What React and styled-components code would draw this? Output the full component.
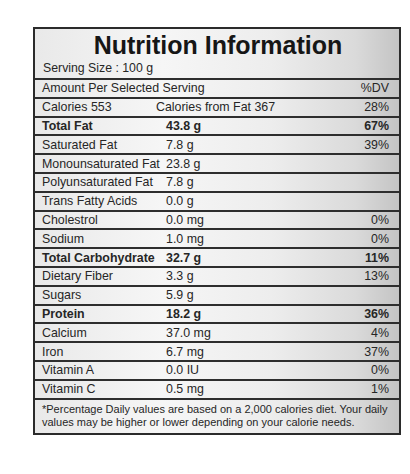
import React from 'react';
import styled, { createGlobalStyle } from 'styled-components';

const ROWS = [
	{ label: 'Total Fat', value: '43.8 g', dv: '67%', bold: true },
	{ label: 'Saturated Fat', value: '7.8 g', dv: '39%' },
	{ label: 'Monounsaturated Fat', value: '23.8 g' },
	{ label: 'Polyunsaturated Fat', value: '7.8 g' },
	{ label: 'Trans Fatty Acids', value: '0.0 g' },
	{ label: 'Cholestrol', value: '0.0 mg', dv: '0%' },
	{ label: 'Sodium', value: '1.0 mg', dv: '0%' },
	{ label: 'Total Carbohydrate', value: '32.7 g', dv: '11%', bold: true },
	{ label: 'Dietary Fiber', value: '3.3 g', dv: '13%' },
	{ label: 'Sugars', value: '5.9 g' },
	{ label: 'Protein', value: '18.2 g', dv: '36%', bold: true },
	{ label: 'Calcium', value: '37.0 mg', dv: '4%' },
	{ label: 'Iron', value: '6.7 mg', dv: '37%' },
	{ label: 'Vitamin A', value: '0.0 IU', dv: '0%' },
	{ label: 'Vitamin C', value: '0.5 mg', dv: '1%' },
];

const App = () => {
	return (
		<>
			<GlobalStyle />
			<Page>
				<Label>
					<Header>
						<Title>Nutrition Information</Title>
						<Serving>Serving Size : 100 g</Serving>
					</Header>
					<Row>
						<Cell>Amount Per Selected Serving</Cell>
						<Cell />
						<Dv>%DV</Dv>
					</Row>
					<CaloriesRow>
						<Cell>Calories 553</Cell>
						<Cell>Calories from Fat 367</Cell>
						<Dv>28%</Dv>
					</CaloriesRow>
					{ROWS.map((r) => (
						<Row key={r.label} $bold={r.bold}>
							<Cell>{r.label}</Cell>
							<Cell>{r.value}</Cell>
							<Dv>{r.dv}</Dv>
						</Row>
					))}
					<Footer>
						*Percentage Daily values are based on a 2,000 calories diet. Your daily values may be higher or
						lower depending on your calorie needs.
					</Footer>
				</Label>
			</Page>
		</>
	);
};

var GlobalStyle = createGlobalStyle`
	html, body {
		margin: 0;
		padding: 0;
		background: #ffffff;
	}
	body {
		font-family: "Liberation Sans", Arial, sans-serif;
		color: #262626;
	}
`;

var Page = styled.div`
	width: 410px;
	height: 474px;
	padding: 27px 0 0 33px;
	box-sizing: border-box;
`;

var Label = styled.div`
	width: 368px;
	box-sizing: border-box;
	border: 2px solid #2b2b2b;
	background: linear-gradient(
		to right,
		#e9e9e9 0%,
		#f6f6f6 35%,
		#ededed 65%,
		#dadada 88%,
		#c4c4c4 100%
	);
`;

var Header = styled.div`
	height: 49px;
	box-sizing: border-box;
	padding: 3px 8px 0;
	display: flex;
	flex-direction: column;
`;

var Title = styled.h1`
	margin: 0;
	text-align: center;
	font-size: 25px;
	line-height: 26px;
	font-weight: 700;
	color: #161616;
	padding-left: 2px;
`;

var Serving = styled.div`
	font-size: 12.3px;
	line-height: 16px;
	margin-top: 2px;
`;

var Row = styled.div`
	display: grid;
	grid-template-columns: 124px 1fr auto;
	align-items: center;
	height: 18.8px;
	box-sizing: border-box;
	border-top: 2px solid #2e2e2e;
	padding: 0 10px 0 7px;
	font-size: 12.4px;
	line-height: 16px;
	font-weight: ${(p) => (p.$bold ? 700 : 400)};
	white-space: nowrap;
`;

var CaloriesRow = styled(Row)`
	grid-template-columns: 114px 1fr auto;
`;

var Cell = styled.span``;

var Dv = styled.span`
	text-align: right;
`;

var Footer = styled.div`
	border-top: 2px solid #2e2e2e;
	padding: 3px 6px 4px 7px;
	font-size: 11px;
	line-height: 13px;
`;

export default App;
